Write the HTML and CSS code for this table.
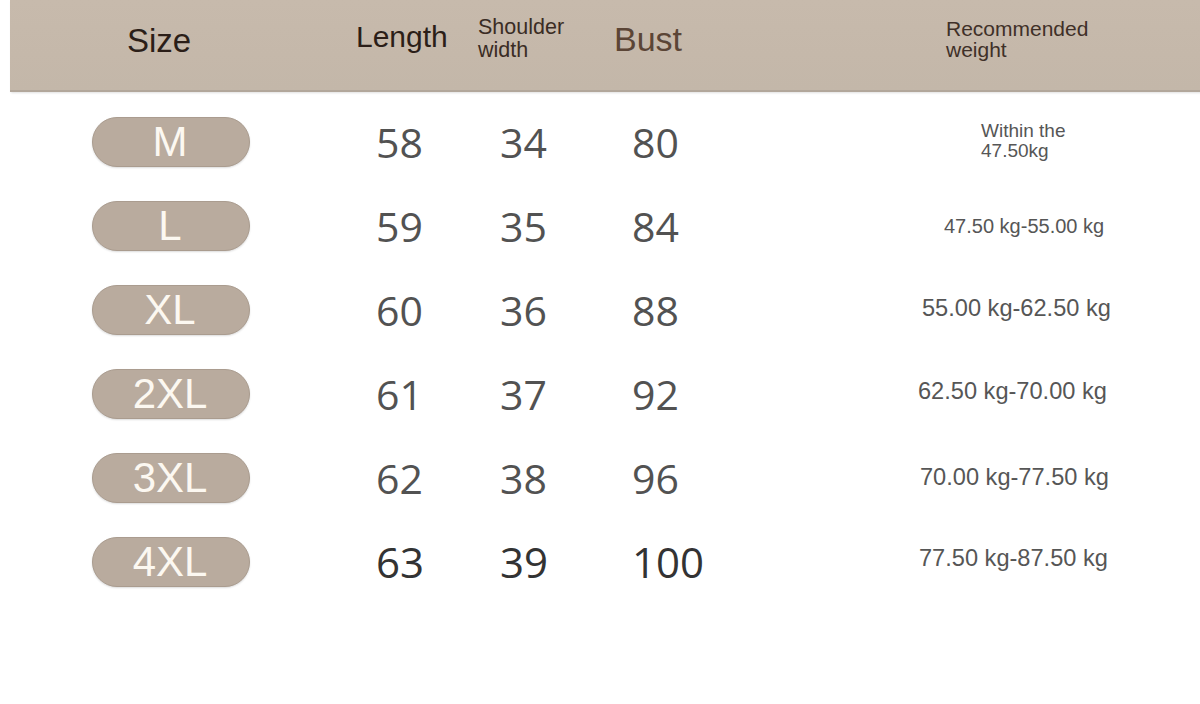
FILE: index.html
```html
<!DOCTYPE html>
<html lang="en">
<head>
<meta charset="utf-8">
<title>Size chart</title>
<link rel="stylesheet" href="styles.css">
</head>
<body>
<div class="page">
  <div class="head">
    <div class="h h-size">Size</div>
    <div class="h h-length">Length</div>
    <div class="h h-shoulder">Shoulder<br>width</div>
    <div class="h h-bust">Bust</div>
    <div class="h h-weight">Recommended<br>weight</div>
  </div>
  <div class="rows">
    <div class="row">
      <div class="pill">M</div>
      <div class="num">58</div>
      <div class="num">34</div>
      <div class="num">80</div>
      <div class="wt wt-1">Within the<br>47.50kg</div>
    </div>
    <div class="row">
      <div class="pill">L</div>
      <div class="num">59</div>
      <div class="num">35</div>
      <div class="num">84</div>
      <div class="wt wt-2">47.50 kg-55.00 kg</div>
    </div>
    <div class="row">
      <div class="pill">XL</div>
      <div class="num">60</div>
      <div class="num">36</div>
      <div class="num">88</div>
      <div class="wt wt-3">55.00 kg-62.50 kg</div>
    </div>
    <div class="row">
      <div class="pill">2XL</div>
      <div class="num">61</div>
      <div class="num">37</div>
      <div class="num">92</div>
      <div class="wt wt-4">62.50 kg-70.00 kg</div>
    </div>
    <div class="row">
      <div class="pill">3XL</div>
      <div class="num">62</div>
      <div class="num">38</div>
      <div class="num">96</div>
      <div class="wt wt-5">70.00 kg-77.50 kg</div>
    </div>
    <div class="row row-last">
      <div class="pill">4XL</div>
      <div class="num">63</div>
      <div class="num">39</div>
      <div class="num">100</div>
      <div class="wt wt-6">77.50 kg-87.50 kg</div>
    </div>
  </div>
</div>
</body>
</html>
```

FILE: styles.css
```css
html, body {
  margin: 0;
  padding: 0;
  background: #ffffff;
}

.page {
  width: 1200px;
  height: 704px;
  overflow: hidden;
  font-family: "Liberation Sans", Arial, sans-serif;
}

.head {
  margin-left: 10px;
  width: 1180px;
  height: 90px;
  background: linear-gradient(180deg, #c7baac 0%, #c5b8aa 60%, #c3b7a9 100%);
  border-bottom: 2px solid #b2a79b;
  box-shadow: 1px 1px 2px rgba(0, 0, 0, 0.12);
  display: flex;
  align-items: flex-start;
  padding-left: 117px;
  box-sizing: content-box;
}

.h {
  flex: none;
  color: #2b1e18;
}

.h-size {
  width: 229px;
  font-size: 33px;
  line-height: 33px;
  margin-top: 24px;
}

.h-length {
  width: 122px;
  font-size: 30px;
  line-height: 30px;
  margin-top: 22px;
}

.h-shoulder {
  width: 136px;
  font-size: 21.5px;
  line-height: 23px;
  margin-top: 16px;
  color: #3a2c24;
}

.h-bust {
  width: 332px;
  font-size: 34px;
  line-height: 34px;
  margin-top: 22px;
  color: #5b4536;
}

.h-weight {
  font-size: 21px;
  line-height: 21px;
  margin-top: 18px;
  color: #3f3028;
}

.rows {
  padding-top: 8px;
}

.row {
  display: grid;
  grid-template-columns: 158px 126px 124px 132px 268px 1fr;
  align-items: center;
  height: 84px;
  padding-left: 92px;
}

.row-last {
  height: 83px;
}

.pill {
  grid-column: 1;
  height: 48px;
  border-radius: 25px;
  background: #b9ab9e;
  border: 1px solid #aa9c8f;
  box-shadow: 0 1px 2px rgba(0, 0, 0, 0.14);
  color: #fcf8f1;
  font-size: 42px;
  line-height: 48px;
  text-align: center;
  padding-right: 2px;
}

.num {
  font-family: "Open Sans", "DejaVu Sans", sans-serif;
  font-size: 41px;
  line-height: 41px;
  color: #525252;
}

.row .num:nth-child(2) { grid-column: 3; }
.row .num:nth-child(3) { grid-column: 4; }
.row .num:nth-child(4) { grid-column: 5; }

.row-last .num {
  font-size: 42px;
  color: #333333;
  font-weight: 500;
}

.wt {
  grid-column: 6;
  color: #565656;
  font-size: 23.6px;
  line-height: 24px;
  white-space: nowrap;
}

.wt-1 {
  font-size: 19px;
  line-height: 20px;
  padding-left: 81px;
  margin-top: -2px;
}

.wt-2 {
  font-size: 20px;
  padding-left: 44px;
}

.wt-3 { padding-left: 22px; margin-top: -4px; }
.wt-4 { padding-left: 18px; margin-top: -6px; }
.wt-5 { padding-left: 20px; margin-top: -2px; }
.wt-6 { padding-left: 19px; margin-top: -8px; }
```
